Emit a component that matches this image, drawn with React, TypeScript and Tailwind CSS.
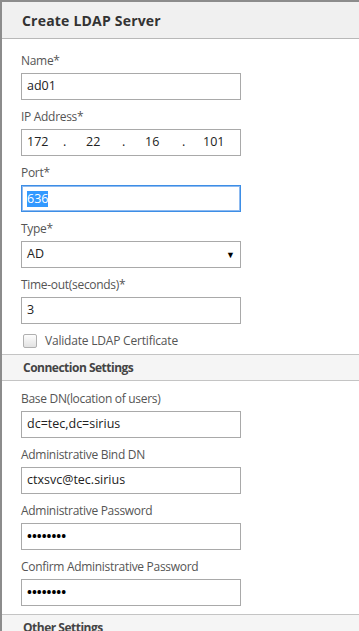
import React from "react";

const font = { fontFamily: '"Open Sans", "Noto Sans", sans-serif' };

function Label({ children }: { children: React.ReactNode }) {
  return <div className="h-[18px] text-[12px] leading-[18px] tracking-[-0.3px] text-[#555555]">{children}</div>;
}

function Box({ children, focused = false }: { children?: React.ReactNode; focused?: boolean }) {
  return (
    <div
      className={
        "mt-[3px] flex h-[27px] w-[220px] items-center border px-[5px] text-[12.5px] text-[#222222] bg-white " +
        (focused ? "border-[#3d8ee6] shadow-[inset_0_0_0_1px_#8dbaf0]" : "border-[#a9a9a9]")
      }
    >
      {children}
    </div>
  );
}

function Field({ label, children, focused = false }: { label: string; children?: React.ReactNode; focused?: boolean }) {
  return (
    <div className="mb-[8px]">
      <Label>{label}</Label>
      <Box focused={focused}>{children}</Box>
    </div>
  );
}

function Dots() {
  return <span className="text-[13px] font-bold text-black">••••••••</span>;
}

function SectionHeader({ title }: { title: string }) {
  return (
    <div className="flex h-[27px] items-center border-y border-[#c4c4c4] bg-[#f5f5f5] px-[21px] text-[12px] font-bold tracking-[-0.5px] text-[#444444]">
      {title}
    </div>
  );
}

export default function App() {
  return (
    <div style={font} className="h-[631px] w-[359px] overflow-hidden border-l-2 border-t-2 border-[#8c8c8c] bg-white">
      <div className="flex h-[37px] items-center border-b border-[#b8b8b8] bg-[#f0f0f0] px-[20px] text-[14px] font-bold tracking-[0.2px] text-[#333333]">
        Create LDAP Server
      </div>
      <div className="px-[19px] pt-[13px]">
        <Field label="Name*">ad01</Field>
        <Field label="IP Address*">
          <div className="flex w-full">
            <span className="w-[36px]">172</span>
            <span className="w-[23px]">.</span>
            <span className="w-[36px]">22</span>
            <span className="w-[23px]">.</span>
            <span className="w-[37px]">16</span>
            <span className="w-[21px]">.</span>
            <span>101</span>
          </div>
        </Field>
        <Field label="Port*" focused>
          <span className="bg-[#3399ff] leading-[16px] text-white">636</span>
        </Field>
        <Field label="Type*">
          <div className="flex w-full items-center justify-between">
            <span>AD</span>
            <span className="text-[9px] text-black">▼</span>
          </div>
        </Field>
        <Field label="Time-out(seconds)*">3</Field>
        <div className="flex h-[18px] items-center pb-[1px]">
          <span className="ml-[2px] h-[14px] w-[14px] rounded-[2px] border border-[#b0b0b0] bg-gradient-to-b from-[#fdfdfd] to-[#e2e2e2]" />
          <span className="ml-[8px] text-[12px] tracking-[-0.2px] text-[#555555]">Validate LDAP Certificate</span>
        </div>
      </div>
      <div className="mt-[4px]">
        <SectionHeader title="Connection Settings" />
      </div>
      <div className="px-[19px] pt-[9px]">
        <Field label="Base DN(location of users)">dc=tec,dc=sirius</Field>
        <Field label="Administrative Bind DN">ctxsvc@tec.sirius</Field>
        <Field label="Administrative Password">
          <Dots />
        </Field>
        <Field label="Confirm Administrative Password">
          <Dots />
        </Field>
      </div>
      <div className="mt-[3px]">
        <SectionHeader title="Other Settings" />
      </div>
    </div>
  );
}
